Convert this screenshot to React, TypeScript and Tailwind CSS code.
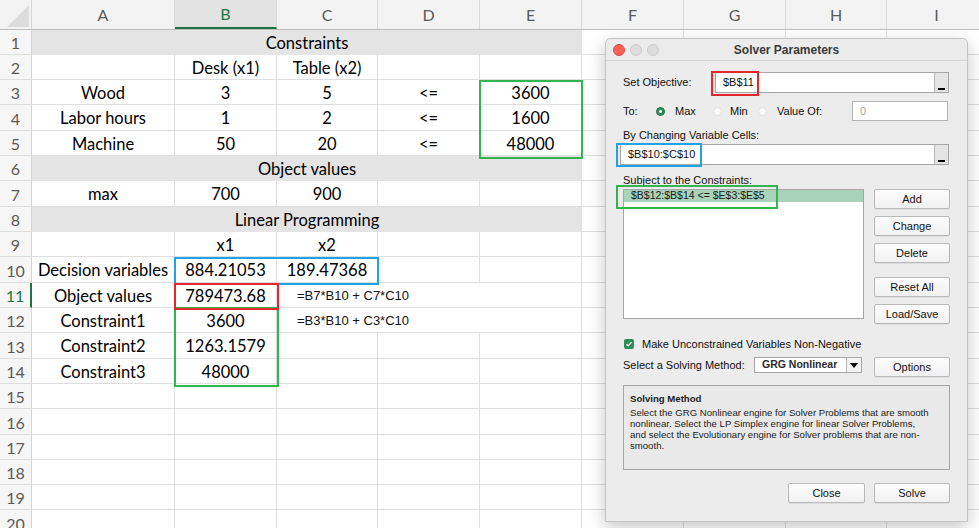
import React from "react";

const COLS = [143, 102, 101, 102, 102, 102, 102, 101, 100];
const LETTERS = ["A", "B", "C", "D", "E", "F", "G", "H", "I"];
const HEIGHTS = [25, 25, 25, 26, 25, 25, 26, 25, 25, 26, 25, 25, 26, 25, 25, 26, 25, 25, 25, 26];

type Row =
  | { merged: string }
  | { cells: string[]; formula?: string };

const ROWS: Row[] = [
  { merged: "Constraints" },
  { cells: ["", "Desk (x1)", "Table (x2)", "", ""] },
  { cells: ["Wood", "3", "5", "<=", "3600"] },
  { cells: ["Labor hours", "1", "2", "<=", "1600"] },
  { cells: ["Machine", "50", "20", "<=", "48000"] },
  { merged: "Object values" },
  { cells: ["max", "700", "900"] },
  { merged: "Linear Programming" },
  { cells: ["", "x1", "x2"] },
  { cells: ["Decision variables", "884.21053", "189.47368"] },
  { cells: ["Object values", "789473.68"], formula: "=B7*B10 + C7*C10" },
  { cells: ["Constraint1", "3600"], formula: "=B3*B10 + C3*C10" },
  { cells: ["Constraint2", "1263.1579"] },
  { cells: ["Constraint3", "48000"] },
  { cells: [] },
  { cells: [] },
  { cells: [] },
  { cells: [] },
  { cells: [] },
  { cells: [] },
];

const cellFont = { fontFamily: "Lato, 'Open Sans', sans-serif" };
const uiFont = { fontFamily: "'Liberation Sans', Arial, sans-serif" };

function HeaderRow() {
  return (
    <div className="flex h-[30px] border-b border-[#bdbdbd] bg-[#f3f3f3]" style={cellFont}>
      <div className="w-[32px] shrink-0 border-r border-[#d4d4d4] relative overflow-hidden">
        <div className="absolute right-[2px] bottom-[2px] w-0 h-0 border-l-[22px] border-l-transparent border-b-[22px] border-b-[#dcdcdc]" />
      </div>
      {LETTERS.map((l, i) => (
        <div
          key={l}
          className={
            "shrink-0 flex items-center justify-center pt-[1px] text-[16px] border-r border-[#dadada] " +
            (l === "B" ? "bg-[#e3e3e3] text-[#217346] border-b-2 border-b-[#217346]" : "text-[#5a5a5a]")
          }
          style={{ width: COLS[i] }}
        >
          {l}
        </div>
      ))}
    </div>
  );
}

function SheetRow({ row, idx }: { row: Row; idx: number }) {
  const h = HEIGHTS[idx];
  const num = idx + 1;
  const isSel = num === 11;
  return (
    <div className="flex" style={{ height: h, ...cellFont }}>
      <div
        className={
          "w-[32px] shrink-0 flex items-center justify-center pt-[2px] text-[16px] bg-[#f6f6f6] border-b border-[#dedede] " +
          (isSel ? "text-[#217346] border-r-2 border-r-[#217346]" : "text-[#5a5a5a] border-r border-r-[#d4d4d4]")
        }
      >
        {num}
      </div>
      {"merged" in row ? (
        <>
          <div className="w-[550px] shrink-0 bg-[#e4e4e4] flex items-center justify-center pt-[2px] text-[16.5px] text-black">
            {row.merged}
          </div>
          {COLS.slice(5).map((w, i) => (
            <div key={i} className="shrink-0 border-r border-b border-[#dedede]" style={{ width: w }} />
          ))}
        </>
      ) : (
        COLS.map((w, i) => {
          const txt = row.cells[i] ?? "";
          const isFormula = i === 2 && row.formula;
          return (
            <div
              key={i}
              className={
                "shrink-0 flex items-center border-b border-[#dedede] whitespace-nowrap text-black " +
                (isFormula || (i === 3 && row.formula) ? "" : "border-r ") +
                (isFormula ? "justify-start pl-[20px] pt-[1px] overflow-visible" : "justify-center pt-[2px] text-[16.5px]")
              }
              style={{ width: w }}
            >
              {isFormula ? (
                <span className="text-[13px] text-[#111]" style={uiFont}>
                  {row.formula}
                </span>
              ) : (
                txt
              )}
            </div>
          );
        })
      )}
    </div>
  );
}

function Btn({ children, className = "" }: { children: React.ReactNode; className?: string }) {
  return (
    <div
      className={
        "w-[76px] h-[20px] flex items-center justify-center text-[11px] text-[#111] bg-gradient-to-b from-[#fdfdfd] to-[#f1f1f1] border border-[#b9b9b9] rounded-[2px] shadow-[0_1px_0_rgba(0,0,0,0.06)] " +
        className
      }
    >
      {children}
    </div>
  );
}

function Radio({ on }: { on?: boolean }) {
  return on ? (
    <div className="w-[9px] h-[9px] rounded-full bg-[#2d8f57] border border-[#23714a] flex items-center justify-center shrink-0">
      <div className="w-[3px] h-[3px] rounded-full bg-white" />
    </div>
  ) : (
    <div className="w-[9px] h-[9px] rounded-full bg-[#f9f9f9] border border-[#e0e0e0] shrink-0" />
  );
}

function RefInput({ value, width }: { value: string; width: number }) {
  return (
    <div className="h-[21px] flex bg-white border border-[#a6a6a6] shrink-0" style={{ width }}>
      <div className="flex-1 flex items-center pl-[7px] text-[11px] text-[#111]">{value}</div>
      <div className="w-[14px] bg-[#e4e4e4] border-l border-[#b5b5b5] flex items-end justify-center pb-[2px]">
        <div className="w-[7px] h-[2px] bg-black" />
      </div>
    </div>
  );
}

function Dialog() {
  return (
    <div
      className="absolute left-[605px] top-[38px] w-[363px] h-[484px] bg-[#ececec] border border-[#c4c4c4] rounded-t-[5px] shadow-[0_6px_18px_rgba(0,0,0,0.22)] text-[#111]"
      style={uiFont}
    >
      {/* title bar */}
      <div className="h-[22px] grid grid-cols-[1fr_auto_1fr] items-center border-b border-[#d6d6d6] bg-[#ebebeb] rounded-t-[5px]">
        <div className="flex items-center gap-[5px] pl-[7px]">
          <div className="w-[12px] h-[12px] rounded-full bg-[#fd5f57] border border-[#de4a42]" />
          <div className="w-[12px] h-[12px] rounded-full bg-[#dcdcdc] border border-[#cbcbcb]" />
          <div className="w-[12px] h-[12px] rounded-full bg-[#dcdcdc] border border-[#cbcbcb]" />
        </div>
        <div className="text-[12px] font-bold text-[#3a3a3a]">Solver Parameters</div>
        <div />
      </div>

      <div className="pl-[17px] pr-[17px]">
        {/* Set objective */}
        <div className="flex items-center mt-[11px] h-[21px]">
          <div className="w-[92px] text-[11px]">Set Objective:</div>
          <RefInput value="$B$11" width={234} />
        </div>

        {/* To */}
        <div className="flex items-center mt-[8px] h-[20px] text-[11px]">
          <div className="w-[33px]">To:</div>
          <Radio on />
          <div className="ml-[10px] w-[38px]">Max</div>
          <Radio />
          <div className="ml-[8px] w-[28px]">Min</div>
          <Radio />
          <div className="ml-[10px]">Value Of:</div>
          <div className="ml-auto mr-[2px] w-[96px] h-[20px] bg-white border border-[#b5b5b5] flex items-center pl-[7px] text-[#a8a8a8]">
            0
          </div>
        </div>

        {/* By changing */}
        <div className="mt-[7px] h-[14px] flex items-center text-[11px]">By Changing Variable Cells:</div>
        <div className="mt-[2px] ml-[-3px]">
          <RefInput value="$B$10:$C$10" width={329} />
        </div>

        {/* Constraints */}
        <div className="mt-[8px] h-[14px] flex items-center text-[11px]">Subject to the Constraints:</div>
        <div className="flex mt-[2px]">
          <div className="w-[241px] h-[130px] bg-white border border-[#a6a6a6]">
            <div className="h-[12px] bg-[#a9d3b8] flex items-center pl-[7px] text-[10.5px] text-[#1a1a1a]">
              $B$12:$B$14 &lt;= $E$3:$E$5
            </div>
          </div>
          <div className="ml-[10px] flex flex-col">
            <Btn>Add</Btn>
            <Btn className="mt-[7px]">Change</Btn>
            <Btn className="mt-[7px]">Delete</Btn>
            <Btn className="mt-[14px]">Reset All</Btn>
            <Btn className="mt-[7px]">Load/Save</Btn>
          </div>
        </div>

        {/* checkbox */}
        <div className="flex items-center mt-[13px] h-[14px] text-[11px]">
          <div className="w-[10px] h-[10px] ml-[1px] bg-[#2f8c58] rounded-[2px] flex items-center justify-center">
            <svg width="8" height="8" viewBox="0 0 8 8">
              <path d="M1.5 4.2 L3.2 5.8 L6.5 2.2" stroke="white" strokeWidth="1.4" fill="none" />
            </svg>
          </div>
          <div className="ml-[8px]">Make Unconstrained Variables Non-Negative</div>
        </div>

        {/* method */}
        <div className="flex items-start mt-[6px] h-[20px] text-[11px]">
          <div className="w-[131px] h-[16px] flex items-center">Select a Solving Method:</div>
          <div className="w-[108px] h-[16px] bg-white border border-[#a6a6a6] flex">
            <div className="flex-1 flex items-center pl-[7px] text-[10.5px] font-bold text-[#2a2a2a]">GRG Nonlinear</div>
            <div className="w-[15px] border-l border-[#b5b5b5] bg-[#f3f3f3] flex items-center justify-center">
              <div className="w-0 h-0 border-l-[4px] border-r-[4px] border-t-[5px] border-l-transparent border-r-transparent border-t-black" />
            </div>
          </div>
          <Btn className="ml-[12px] h-[19px]">Options</Btn>
        </div>

        {/* Solving method box */}
        <div className="mt-[8px] w-[327px] h-[85px] border border-[#a6a6a6] bg-[#e9e9e9] px-[6px] pt-[7px] text-[9.6px] leading-[11px] text-[#222]">
          <div className="font-bold">Solving Method</div>
          <div className="mt-[3px] whitespace-nowrap">
            Select the GRG Nonlinear engine for Solver Problems that are smooth
            <br />
            nonlinear. Select the LP Simplex engine for linear Solver Problems,
            <br />
            and select the Evolutionary engine for Solver problems that are non-
            <br />
            smooth.
          </div>
        </div>

        {/* bottom buttons */}
        <div className="flex justify-end mt-[13px]">
          <Btn className="w-[77px]">Close</Btn>
          <Btn className="ml-[9px]">Solve</Btn>
        </div>
      </div>

      {/* annotation boxes */}
      <div className="absolute left-[105px] top-[32px] w-[48px] h-[25px] border-2 border-[#e5262e]" />
      <div className="absolute left-[10px] top-[104px] w-[86px] h-[24px] border-2 border-[#1fa3e6]" />
      <div className="absolute left-[10px] top-[146px] w-[162px] h-[24px] border-2 border-[#34b44e]" />
    </div>
  );
}

export default function App() {
  return (
    <div className="relative w-[979px] h-[528px] overflow-hidden bg-white">
      <HeaderRow />
      <div className="relative">
        {ROWS.map((r, i) => (
          <SheetRow key={i} row={r} idx={i} />
        ))}
        <div className="absolute left-[479px] top-[50px] w-[104px] h-[79px] border-2 border-[#34b44e]" />
        <div className="absolute left-[174px] top-[227px] w-[205px] h-[28px] border-2 border-[#1fa3e6]" />
        <div className="absolute left-[174px] top-[277px] w-[105px] h-[80px] border-2 border-[#34b44e]" />
        <div className="absolute left-[174px] top-[253px] w-[105px] h-[27px] border-2 border-[#e5262e]" />
      </div>
      <Dialog />
    </div>
  );
}
